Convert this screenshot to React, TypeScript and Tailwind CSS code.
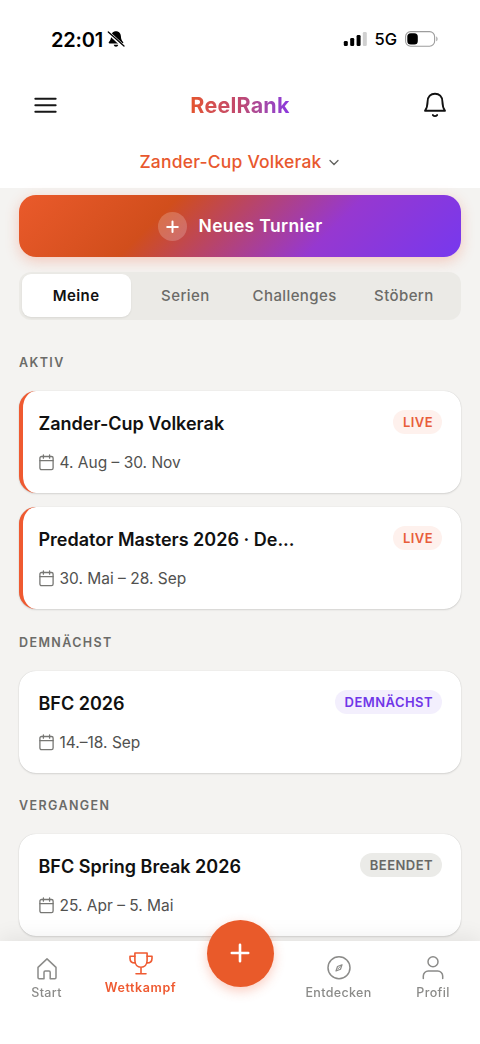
const tabs = ["Meine", "Serien", "Challenges", "Stöbern"];

const sections = [
  {
    title: "AKTIV",
    gap: "pt-[33px]",
    items: [
      { name: "Zander-Cup Volkerak", date: "4. Aug – 30. Nov", status: "LIVE" },
      { name: "Predator Masters 2026 · De...", date: "30. Mai – 28. Sep", status: "LIVE" },
    ],
  },
  {
    title: "DEMNÄCHST",
    gap: "pt-[24.500px]",
    items: [{ name: "BFC 2026", date: "14.–18. Sep", status: "DEMNÄCHST" }],
  },
  {
    title: "VERGANGEN",
    gap: "pt-[23.500px]",
    items: [{ name: "BFC Spring Break 2026", date: "25. Apr – 5. Mai", status: "BEENDET" }],
  },
];

const badgeStyles: Record<string, string> = {
  LIVE: "bg-[#fef1ed] text-[#e85d3a]",
  DEMNÄCHST: "bg-[#f3effd] text-[#7036e8]",
  BEENDET: "bg-[#ebebe8] text-[#686866]",
};

function StatusBar() {
  return (
    <div className="flex h-[78px] items-center justify-between pl-[51px] pr-[41px] text-black">
      <div className="flex items-center gap-[4px]">
        <span className="pt-px text-[20px] font-semibold tracking-[-0.200px]">22:01</span>
        <svg width="18" height="18" viewBox="0 0 18 18">
          <path
            d="M9 1.200c-3 0-4.800 2.200-4.900 5.100C4 9.400 3.100 10.700 1.900 12c-.5.7-.1 1.500.7 1.500h12.800c.8 0 1.200-.8.7-1.500-1.200-1.300-2.100-2.600-2.200-5.700C13.800 3.400 12 1.200 9 1.200ZM6.700 14.700h4.600C11 16 10.200 16.700 9 16.700s-2-.7-2.300-2Z"
            fill="black"
          />
          <path d="M1 2.200 16.600 16.400" stroke="white" strokeWidth="3.400" />
          <path d="M1.300 2 17 16" stroke="black" strokeWidth="1.300" strokeLinecap="round" />
        </svg>
      </div>
      <div className="flex items-center">
        <svg width="24" height="16" viewBox="0 0 24 16">
          <rect x="0.800" y="10" width="4" height="5" rx="1.300" />
          <rect x="7.200" y="7" width="4" height="8" rx="1.300" />
          <rect x="13.600" y="4" width="4" height="11" rx="1.300" />
          <rect x="19.800" y="1" width="4" height="14" rx="1.300" fill="#d0d0d0" />
        </svg>
        <span className="ml-[7px] pt-px text-[16.500px] font-medium">5G</span>
        <svg className="ml-2" width="34" height="16" viewBox="0 0 34 16" fill="none">
          <rect x="0.600" y="0.600" width="29" height="14.600" rx="5" stroke="#9d9d9d" strokeWidth="1.100" />
          <rect x="2.300" y="2.300" width="10.500" height="11.200" rx="3.500" fill="black" />
          <path d="M31.300 5.500c1.600.5 1.600 4.300 0 4.800z" fill="#9d9d9d" />
        </svg>
      </div>
    </div>
  );
}

function Header() {
  return (
    <header className="h-[188px] bg-white">
      <StatusBar />
      <div className="flex h-[54px] items-center justify-between pl-[34px] pr-[33px]">
        <svg width="23" height="18" viewBox="0 0 23 18" stroke="#171717" strokeWidth="1.900" strokeLinecap="round">
          <path d="M1.300 2.700h20.400M1.300 9.200h20.400M1.300 15.700h20.400" />
        </svg>
        <span className="bg-gradient-to-r from-[#e5552a] via-[#c0486f] to-[#8b35e0] bg-clip-text pt-px text-[21.500px] font-bold tracking-[0.200px] text-transparent">
          ReelRank
        </span>
        <svg
          width="24"
          height="26"
          viewBox="0 0 24 26"
          fill="none"
          stroke="#111111"
          strokeWidth="1.900"
          strokeLinecap="round"
          strokeLinejoin="round"
        >
          <path d="M2 18.800c1.700-2.300 2.500-4.600 2.600-9.300C4.700 4.600 7.800 1.700 12 1.700s7.300 2.900 7.400 7.800c.1 4.700.9 7 2.600 9.300z" />
          <path d="M9.900 23.100c1.100 1.300 3.100 1.300 4.200 0" />
        </svg>
      </div>
      <div className="flex h-[60px] items-center justify-center gap-[7px] pr-[2px]">
        <span className="text-[17.500px] font-medium tracking-[0.200px] text-[#e8582e]">Zander-Cup Volkerak</span>
        <svg width="10" height="7" viewBox="0 0 10 7" fill="none" stroke="#62625f" strokeWidth="1.300" strokeLinecap="round">
          <path d="m1 1.500 4 4 4-4" />
        </svg>
      </div>
    </header>
  );
}

function CalendarIcon() {
  return (
    <svg width="15" height="17" viewBox="0 0 15 17" fill="none" stroke="#777774" strokeWidth="1.300" strokeLinecap="round">
      <rect x="0.900" y="2.500" width="13.200" height="13.200" rx="1.600" />
      <path d="M.9 6.600h13.200M4.400 1v3.200M10.600 1v3.200" />
    </svg>
  );
}

function TournamentCard({ name, date, status }: { name: string; date: string; status: string }) {
  const live = status === "LIVE";
  return (
    <article
      className={`h-[101.500px] rounded-[17px] bg-white pr-[19px] pt-[19px] shadow-[0_1px_2px_rgba(0,0,0,0.12),0_0_1px_rgba(0,0,0,0.18)] ${
        live ? "border-l-4 border-[#ef5a31] pl-[15.500px]" : "pl-[19.500px]"
      }`}
    >
      <div className="flex h-6 items-center justify-between">
        <h3 className="whitespace-nowrap pt-[2px] text-[18px] font-semibold text-[#111111]">{name}</h3>
        <span
          className={`flex h-6 items-center rounded-full pl-[9.500px] pr-[9px] pt-px text-[13px] font-semibold tracking-[0.450px] ${badgeStyles[status]}`}
        >
          {status}
        </span>
      </div>
      <div className="mt-[17px] flex h-[22px] items-center gap-[6px] text-[15.500px] text-[#51514f]">
        <CalendarIcon />
        <span className="pt-px">{date}</span>
      </div>
    </article>
  );
}

function BottomNav() {
  return (
    <nav className="fixed inset-x-0 bottom-0 h-[103px] bg-white text-[12.500px] font-medium tracking-[0.350px] text-[#8b8b89] shadow-[0_-4px_20px_rgba(0,0,0,0.07)]">
      <div className="grid grid-cols-[93px_95px_103px_95px_94px]">
        <div className="flex flex-col items-center pt-4">
          <svg width="22" height="24" viewBox="0 0 22 24" fill="none" stroke="currentColor" strokeWidth="1.500" strokeLinejoin="round">
            <path d="M2 10.400 11 1.900l9 8.500v10.200a1.200 1.200 0 0 1-1.200 1.200h-4.600v-6.500a1.200 1.200 0 0 0-1.200-1.200H9.200A1.200 1.200 0 0 0 8 15.300v6.500H3.200A1.200 1.200 0 0 1 2 20.600z" />
          </svg>
          <span className="mt-[3px] leading-[18px]">Start</span>
        </div>
        <div className="flex flex-col items-center pt-[10px] font-semibold text-[#ef5a31]">
          <svg width="26" height="26" viewBox="0 0 26 26" fill="none" stroke="currentColor" strokeWidth="1.600" strokeLinecap="round" strokeLinejoin="round">
            <path d="M6.900 2h12.200v7.500c0 4-2.600 6.700-6.100 6.700s-6.100-2.700-6.100-6.700zM13 16.200v6.200M8 22.700h10" />
            <path d="M6.900 5.200H2v2.200c0 2.700 2 4.500 5 4.500M19.100 5.200H24v2.200c0 2.700-2 4.500-5 4.500" />
          </svg>
          <span className="mt-[2px] leading-[18px] tracking-[0.600px]">Wettkampf</span>
        </div>
        <div />
        <div className="flex flex-col items-center pt-[14px]">
          <svg width="26" height="26" viewBox="0 0 26 26" fill="none" stroke="currentColor" strokeWidth="1.500">
            <circle cx="13" cy="12.800" r="11" />
            <path d="m16 9.700-1.500 4.500-4.500 1.800 1.500-4.500z" strokeWidth="1.200" strokeLinejoin="round" />
            <path d="m11.500 14.300 3-3" strokeWidth="1" />
          </svg>
          <span className="mt-[3px] leading-[18px]">Entdecken</span>
        </div>
        <div className="flex flex-col items-center pt-[14px]">
          <svg width="24" height="26" viewBox="0 0 24 26" fill="none" stroke="currentColor" strokeWidth="1.500" strokeLinecap="round">
            <circle cx="12" cy="6.800" r="5" />
            <path d="M2.300 23.600v-2.600a5 5 0 0 1 5-5h9.400a5 5 0 0 1 5 5v2.600" />
          </svg>
          <span className="mt-[3px] leading-[18px]">Profil</span>
        </div>
      </div>
      <button className="absolute left-[206.500px] -top-[21.500px] flex size-[67px] items-center justify-center rounded-full bg-[#e95a2a] shadow-[0_4px_12px_rgba(239,90,49,0.3)]">
        <svg width="22" height="22" viewBox="0 0 22 22" stroke="white" strokeWidth="2.600" strokeLinecap="round">
          <path d="M11 2.800v16.400M2.800 11h16.400" />
        </svg>
      </button>
    </nav>
  );
}

export default function App() {
  return (
    <div className="h-[1044px] w-[480px] overflow-hidden bg-[#f4f3f1] font-['Inter',sans-serif]">
      <Header />
      <main className="px-[19px] pt-[7px]">
        <button className="flex h-[62px] w-full items-center justify-center gap-3 rounded-[17px] bg-[linear-gradient(135deg,#ea5a2b_0%,#d14e1c_32%,#9638d0_69%,#7738ee_100%)] text-white shadow-[0_4px_14px_rgba(239,90,49,0.28)]">
          <span className="flex size-[29px] items-center justify-center rounded-full bg-white/20">
            <svg width="13" height="13" viewBox="0 0 13 13" stroke="white" strokeWidth="2" strokeLinecap="round">
              <path d="M6.500 1.500v10.500M1.200 6.900h10.600" />
            </svg>
          </span>
          <span className="text-[17.500px] font-semibold tracking-[0.350px]">Neues Turnier</span>
        </button>

        <div className="mt-[15px] grid h-[48px] grid-cols-4 rounded-[12px] bg-[#ebeae6] px-[2.500px] pt-[2px] pb-[3px] text-[15px] tracking-[0.400px]">
          {tabs.map((tab, i) => (
            <button
              key={tab}
              className={
                i === 0
                  ? "rounded-[9px] bg-white pt-px font-semibold text-[#111111] shadow-[0_1px_2px_rgba(0,0,0,0.08)]"
                  : "pt-px font-medium text-[#6b6b68]"
              }
            >
              {tab}
            </button>
          ))}
        </div>

        {sections.map((section) => (
          <section key={section.title} className={section.gap}>
            <h2 className="mb-[19px] text-[12.500px] font-semibold leading-[19px] tracking-[1.400px] text-[#6b6b68]">
              {section.title}
            </h2>
            <div className="flex flex-col gap-[14.500px]">
              {section.items.map((item) => (
                <TournamentCard key={item.name} {...item} />
              ))}
            </div>
          </section>
        ))}
      </main>
      <BottomNav />
    </div>
  );
}
